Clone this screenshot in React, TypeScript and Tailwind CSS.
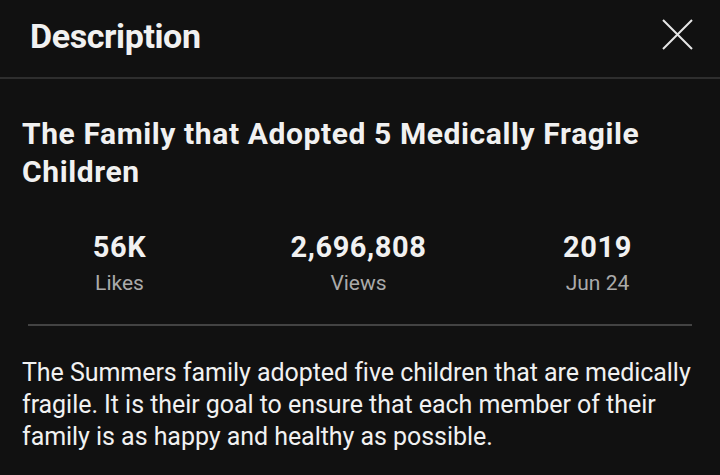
import React from 'react';

const stats = [
  { value: '56K', label: 'Likes' },
  { value: '2,696,808', label: 'Views' },
  { value: '2019', label: 'Jun 24' },
];

export default function App() {
  return (
    <div className="w-[720px] h-[475px] overflow-hidden bg-[#111111] text-[#f1f1f1] font-['Roboto',sans-serif]">
      {/* En-tête */}
      <div className="h-[79px] flex items-start justify-between pl-[30px] pr-[27px] border-b-2 border-[#2e2e2e]">
        <h1 className="mt-[16px] text-[34px] leading-[40px] font-bold tracking-[-0.4px] text-[#f1f1f1]">
          Description
        </h1>
        <button className="mt-[19px] text-[#e6e6e6]">
          <svg width="31" height="31" viewBox="0 0 31 31" fill="none" stroke="currentColor" strokeWidth="2">
            <path d="M1 1L30 30M30 1L1 30" />
          </svg>
        </button>
      </div>

      {/* Titre */}
      <div className="px-[22px] pt-[36px]">
        <h2 className="text-[30px] leading-[38px] font-bold tracking-[0.6px] text-[#f1f1f1]">
          The Family that Adopted 5 Medically Fragile Children
        </h2>
      </div>

      {/* Statistiques */}
      <div className="grid grid-cols-3 mt-[39px] pr-[3px]">
        {stats.map(s => (
          <div key={s.label} className="flex flex-col items-center">
            <span className="text-[29px] leading-[34px] font-bold tracking-[0.6px] text-[#f1f1f1]">{s.value}</span>
            <span className="text-[21px] leading-[28px] mt-[5px] text-[#aaaaaa]">{s.label}</span>
          </div>
        ))}
      </div>

      <div className="mx-[28px] mt-[27px] h-[2px] bg-[#434343]" />

      {/* Texte */}
      <p className="px-[22px] pt-[31px] text-[25px] leading-[32px] tracking-[-0.05px] text-[#f1f1f1]">
        The Summers family adopted five children that are medically fragile. It is their goal to ensure that each member of their family is as happy and healthy as possible.
      </p>
    </div>
  );
}
